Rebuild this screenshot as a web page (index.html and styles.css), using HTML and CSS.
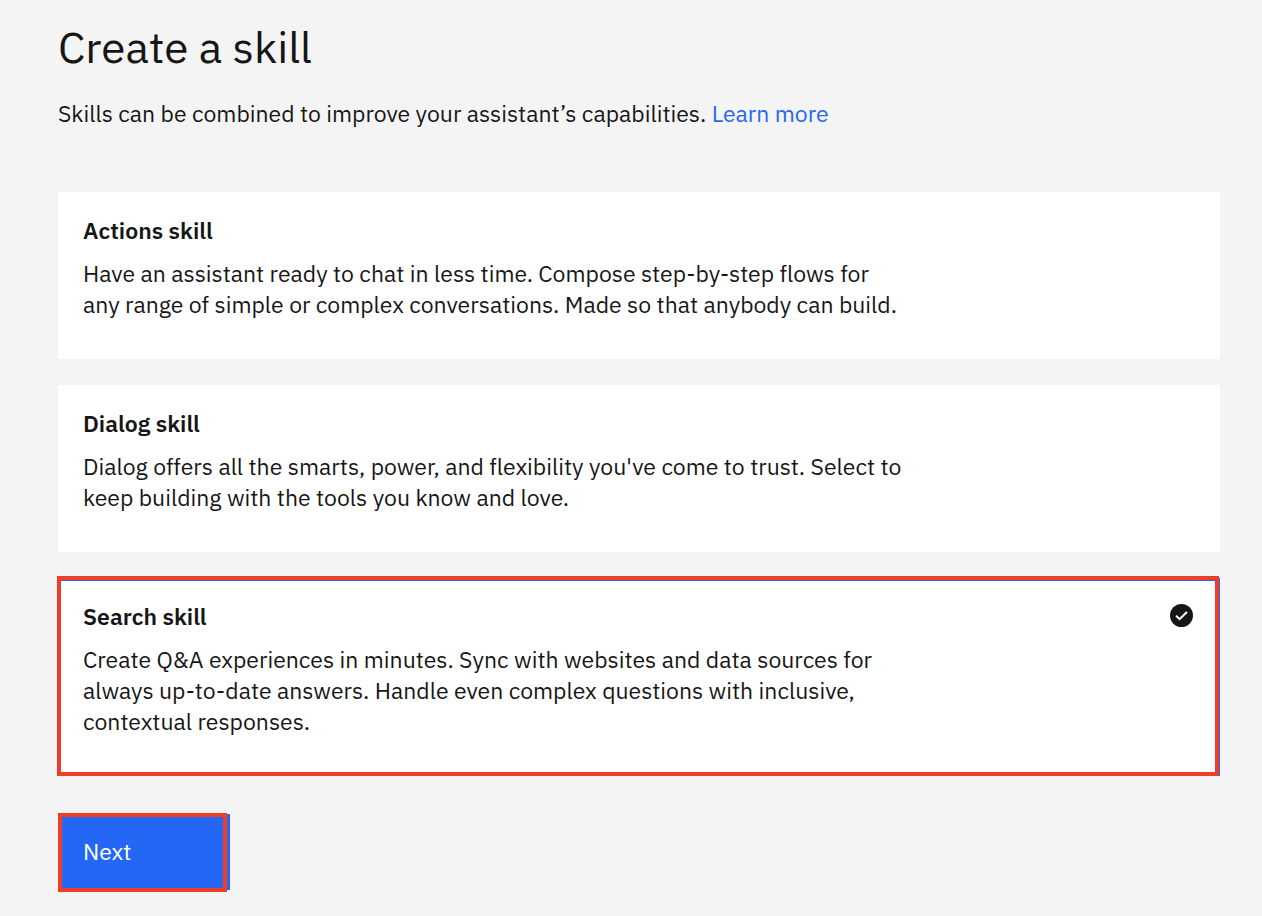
FILE: index.html
```html
<!DOCTYPE html>
<html lang="en">
<head>
<meta charset="utf-8">
<meta name="viewport" content="width=device-width, initial-scale=1">
<title>Create a skill</title>
<link rel="stylesheet" href="styles.css">
</head>
<body>
<main class="page">
  <h1 class="page-title">Create a skill</h1>
  <p class="intro">Skills can be combined to improve your assistant’s capabilities. <a class="link" href="#">Learn more</a></p>
  <form class="skill-form">
    <div class="skills" role="radiogroup" aria-label="Skill type">
      <label class="card">
        <input class="card-input" type="radio" name="skill" value="actions">
        <span class="card-title">Actions skill</span>
        <span class="card-text">Have an assistant ready to chat in less time. Compose step-by-step flows for<br>any range of simple or complex conversations. Made so that anybody can build.</span>
      </label>
      <label class="card">
        <input class="card-input" type="radio" name="skill" value="dialog">
        <span class="card-title">Dialog skill</span>
        <span class="card-text">Dialog offers all the smarts, power, and flexibility you've come to trust. Select to<br>keep building with the tools you know and love.</span>
      </label>
      <label class="card card-selected">
        <input class="card-input" type="radio" name="skill" value="search" checked>
        <span class="card-title">Search skill</span>
        <span class="card-text">Create Q&amp;A experiences in minutes. Sync with websites and data sources for<br>always up-to-date answers. Handle even complex questions with inclusive,<br>contextual responses.</span>
        <svg class="check" viewBox="0 0 22 22" aria-hidden="true"><circle cx="11" cy="11" r="11" fill="#161616"/><path d="M5.8 11.2 9.2 14.5 16.2 7.6" fill="none" stroke="#fff" stroke-width="2"/></svg>
      </label>
    </div>
    <button class="next" type="button">Next</button>
  </form>
</main>
</body>
</html>
```
FILE: styles.css
```css
* {
  box-sizing: border-box;
}

body {
  margin: 0;
  background: #f4f4f4;
  color: #161616;
  font-family: "IBM Plex Sans", "Noto Sans", sans-serif;
  font-size: 23px;
  line-height: 31px;
}

.page {
  padding: 19px 42px 24px 58px;
}

.page-title {
  margin: 0;
  font-size: 44px;
  font-weight: 400;
  line-height: 56px;
}

.intro {
  margin: 23px 0 63px;
}

.link {
  color: #2467f5;
  text-decoration: none;
}

.skills {
  display: grid;
  gap: 26px;
}

.card {
  position: relative;
  display: flex;
  flex-direction: column;
  gap: 12px;
  padding: 23px 25px 39px;
  background: #fff;
  cursor: pointer;
}

.card-input {
  position: absolute;
  opacity: 0;
}

.card-title {
  font-weight: 600;
}

.card-selected {
  box-shadow: inset 0 0 0 3px #2467f5;
}

.card-selected::after,
.next::after {
  content: "";
  position: absolute;
  border: 4px solid #ee3e27;
  pointer-events: none;
}

.card-selected::after {
  inset: -2px 1px 0 -1px;
}

.check {
  position: absolute;
  top: 26px;
  right: 27px;
  width: 23px;
  height: 23px;
}

.next {
  position: relative;
  display: block;
  min-width: 172px;
  margin-top: 38px;
  padding: 22px 25px 23px;
  border: 0;
  background: #2467f5;
  color: #fff;
  font: inherit;
  text-align: left;
  cursor: pointer;
}

.next::after {
  inset: -1px 3px -2px 0;
}
```
